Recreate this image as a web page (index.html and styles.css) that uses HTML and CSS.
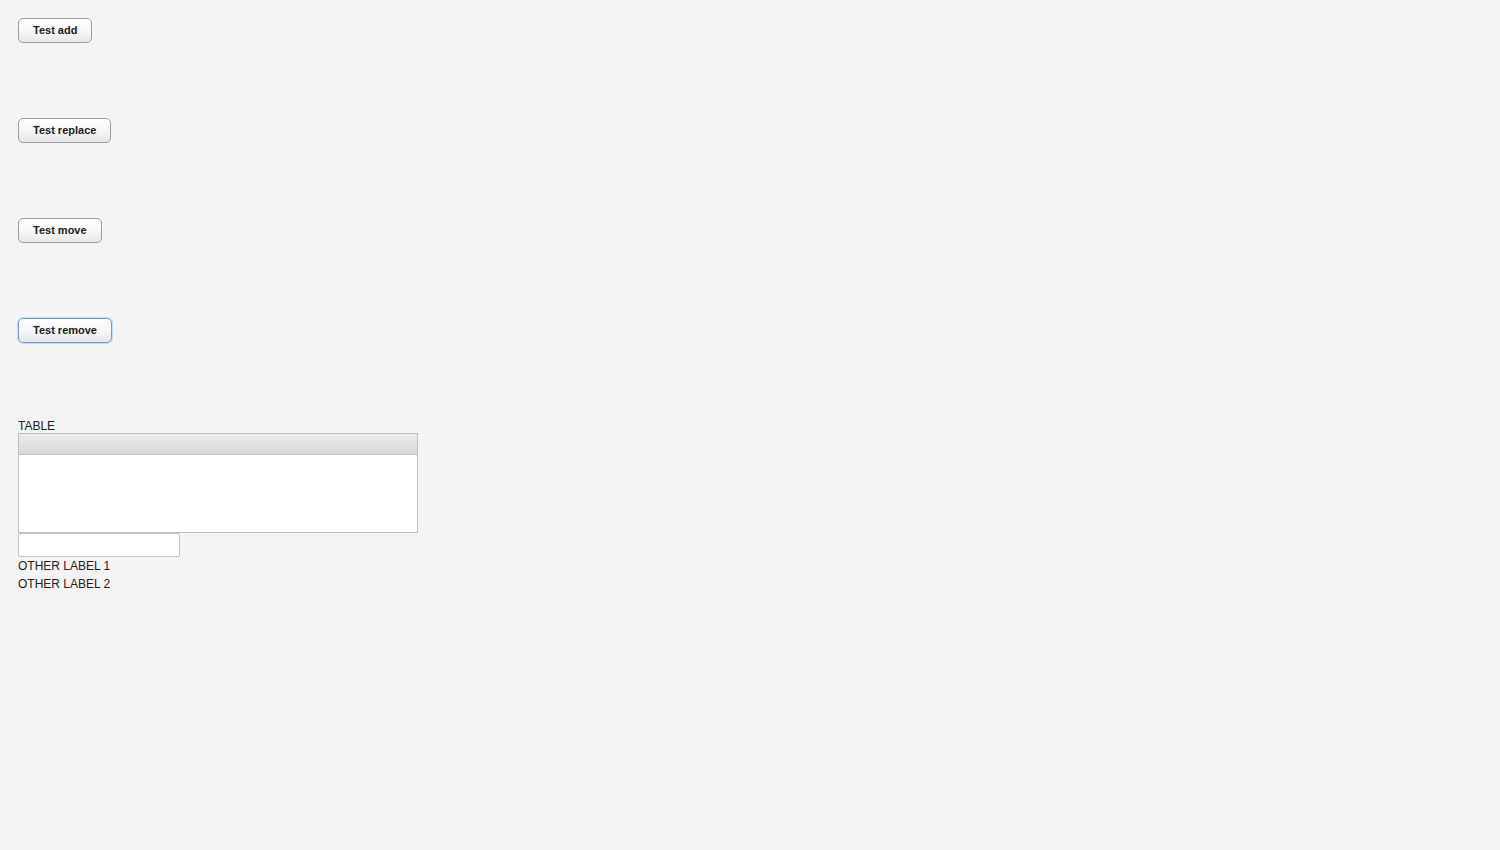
FILE: index.html
```html
<!DOCTYPE html>
<html>
<head>
<meta charset="utf-8">
<link rel="stylesheet" href="styles.css">
</head>
<body>
<div class="page">
  <div class="btn-row"><button class="btn">Test add</button></div>
  <div class="btn-row"><button class="btn">Test replace</button></div>
  <div class="btn-row"><button class="btn">Test move</button></div>
  <div class="btn-row"><button class="btn focused">Test remove</button></div>
  <div class="label title">TABLE</div>
  <div class="table">
    <div class="table-head"></div>
    <div class="table-body"></div>
  </div>
  <input class="field" type="text">
  <div class="label small">OTHER LABEL 1</div>
  <div class="label small">OTHER LABEL 2</div>
</div>
</body>
</html>
```
FILE: styles.css
```css
html, body {
  margin: 0;
  padding: 0;
  background: #f4f4f4;
}
body {
  font-family: "Liberation Sans", Arial, sans-serif;
  color: #222;
}
.page {
  padding: 18px;
  display: flex;
  flex-direction: column;
  align-items: flex-start;
}
.btn-row {
  height: 100px;
}
.btn {
  height: 25px;
  padding: 0 14px 1px;
  font-family: "Liberation Sans", Arial, sans-serif;
  font-size: 11px;
  font-weight: bold;
  color: #1a1a1a;
  border: 1px solid #9c9c9c;
  border-radius: 5px;
  background: linear-gradient(#ffffff 0%, #f7f7f7 50%, #e6e6e6 100%);
  box-shadow: inset 0 1px 0 #fff;
}
.btn.focused {
  border-color: #6f9ad2;
  box-shadow: 0 0 0 1px #c6dcf3, inset 0 1px 0 #fff;
}
.label {
  font-size: 12px;
  line-height: 15px;
  color: #222;
}
.label.title {
  padding-top: 2px;
  line-height: 13px;
}
.table {
  width: 398px;
  border: 1px solid #bdbdbd;
  background: #fff;
}
.table-head {
  height: 20px;
  border-bottom: 1px solid #c0c0c0;
  background: linear-gradient(#ececed, #d8d8da);
}
.table-body {
  height: 77px;
}
.field {
  box-sizing: border-box;
  width: 162px;
  height: 24px;
  margin: 0;
  border: 1px solid #c3c3c3;
  border-radius: 2px;
  background: #fff;
}
.label.small {
  margin-top: 2px;
  line-height: 15px;
}
.label.small + .label.small {
  margin-top: 3px;
}
```
